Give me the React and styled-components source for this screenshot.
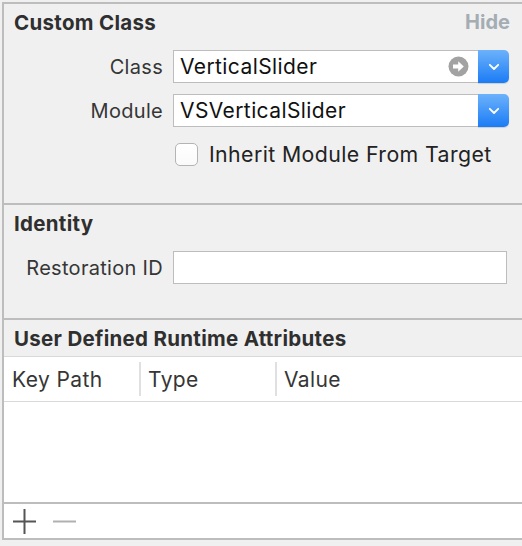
import React from "react";
import styled, { createGlobalStyle } from "styled-components";

const GlobalStyle = createGlobalStyle`
  html, body {
    margin: 0;
    padding: 0;
    background: #f0f0f0;
  }
  body {
    font-family: Inter, "Liberation Sans", sans-serif;
    -webkit-font-smoothing: antialiased;
  }
`;

const ArrowCircle = () => (
  <svg width="21" height="21" viewBox="0 0 21 21">
    <circle cx="10.5" cy="10.5" r="10" fill="#a2a2a2" />
    <path d="M5 8.6h5.2V5.2l5.6 5.3-5.6 5.3v-3.4H5z" fill="#fff" />
  </svg>
);

const Chevron = () => (
  <svg width="12" height="8" viewBox="0 0 12 8">
    <path d="M1.8 1.8l4.2 4.2 4.2-4.2" fill="none" stroke="#fff" strokeWidth="1.8" strokeLinecap="round" strokeLinejoin="round" />
  </svg>
);

const Plus = () => (
  <svg width="23" height="25" viewBox="0 0 23 25">
    <path d="M0 12.5h23M11.5 0v25" stroke="#555" strokeWidth="2" />
  </svg>
);

const Minus = () => (
  <svg width="23" height="25" viewBox="0 0 23 25">
    <path d="M0 12.5h23" stroke="#b0b0b0" strokeWidth="2" />
  </svg>
);

const App = () => {
  return (
    <>
      <GlobalStyle />
      <Page>
        <Panel>
          <Section $height={199}>
            <TitleRow>
              <Title>Custom Class</Title>
              <HideLink>Hide</HideLink>
            </TitleRow>
            <Form $top={16}>
              <Label>Class</Label>
              <Combo>
                <Field>
                  <FieldText>VerticalSlider</FieldText>
                  <ArrowCircle />
                </Field>
                <DropButton>
                  <Chevron />
                </DropButton>
              </Combo>
              <Label>Module</Label>
              <Combo>
                <Field>
                  <FieldText>VSVerticalSlider</FieldText>
                </Field>
                <DropButton>
                  <Chevron />
                </DropButton>
              </Combo>
              <span />
              <CheckRow>
                <Checkbox />
                <CheckLabel>Inherit Module From Target</CheckLabel>
              </CheckRow>
            </Form>
          </Section>

          <Section $height={113}>
            <TitleRow>
              <Title>Identity</Title>
            </TitleRow>
            <Form $top={16} $right={15}>
              <Label>Restoration ID</Label>
              <Field $plain />
            </Form>
          </Section>

          <AttrHeader>
            <Title>User Defined Runtime Attributes</Title>
          </AttrHeader>
          <Table>
            <HeaderRow>
              <HeaderCell $width={135}>Key Path</HeaderCell>
              <HeaderCell $width={136} $divider>Type</HeaderCell>
              <HeaderCell $divider>Value</HeaderCell>
            </HeaderRow>
            <TableBody />
            <Toolbar>
              <ToolButton><Plus /></ToolButton>
              <ToolButton><Minus /></ToolButton>
            </Toolbar>
          </Table>
        </Panel>
      </Page>
    </>
  );
};

const Page = styled.div`
  height: 546px;
  padding: 2px 0 0 2px;
  box-sizing: border-box;
  overflow: hidden;
`;

const Panel = styled.div`
  border-top: 2px solid #bdbdbd;
  border-left: 2px solid #bdbdbd;
  display: flex;
  flex-direction: column;
`;

const Section = styled.div`
  height: ${(p) => p.$height}px;
  border-bottom: 2px solid #bdbdbd;
  padding: 0 0 0 10px;
`;

const TitleRow = styled.div`
  display: flex;
  justify-content: space-between;
  align-items: center;
  height: 24px;
  margin-top: 6px;
  padding-right: 12px;
`;

const Title = styled.div`
  font-size: 20.5px;
  font-weight: 700;
  color: #2f2f2f;
  letter-spacing: 0.3px;
`;

const HideLink = styled.div`
  font-size: 20px;
  font-weight: 700;
  color: #a4acb4;
`;

const Form = styled.div`
  display: grid;
  grid-template-columns: 149px 1fr;
  column-gap: 10px;
  row-gap: 11px;
  align-items: center;
  margin-top: ${(p) => p.$top}px;
  padding-right: ${(p) => p.$right || 13}px;
`;

const Label = styled.div`
  font-size: 20px;
  color: #363636;
  text-align: right;
  letter-spacing: 0.3px;
`;

const Combo = styled.div`
  display: flex;
  height: 33px;
`;

const Field = styled.div`
  flex: 1;
  display: flex;
  align-items: center;
  justify-content: space-between;
  height: 33px;
  box-sizing: border-box;
  border: 1px solid #bdbdbd;
  border-right: ${(p) => (p.$plain ? "1px solid #bdbdbd" : "none")};
  background: #fff;
  padding: 0 9px 0 6px;
`;

const FieldText = styled.span`
  font-size: 21px;
  color: #111;
  letter-spacing: 0.4px;
`;

const DropButton = styled.div`
  width: 31px;
  height: 33px;
  display: flex;
  align-items: center;
  justify-content: center;
  border-radius: 0 5px 5px 0;
  background: linear-gradient(#6cb2fb, #1b7cf5);
  box-shadow: 0 1px 1px rgba(0, 0, 0, 0.15);
`;

const CheckRow = styled.div`
  display: flex;
  align-items: center;
  gap: 11px;
  padding-left: 2px;
  margin-top: 3px;
`;

const Checkbox = styled.div`
  width: 23px;
  height: 23px;
  box-sizing: border-box;
  border: 1px solid #b4b4b4;
  border-radius: 5px;
  background: linear-gradient(#fff, #fafafa);
`;

const CheckLabel = styled.span`
  font-size: 21.3px;
  color: #222;
  letter-spacing: 0.4px;
`;

const AttrHeader = styled.div`
  height: 36px;
  padding-left: 10px;
  display: flex;
  align-items: center;
`;

const Table = styled.div`
  background: #fff;
  border-top: 1px solid #d9d9d9;
`;

const HeaderRow = styled.div`
  display: flex;
  align-items: center;
  height: 44px;
  border-bottom: 1px solid #d9d9d9;
`;

const HeaderCell = styled.div`
  ${(p) => (p.$width ? `width: ${p.$width}px;` : "flex: 1;")}
  box-sizing: border-box;
  height: 34px;
  display: flex;
  align-items: center;
  padding-left: ${(p) => (p.$divider ? 7 : 8)}px;
  border-left: ${(p) => (p.$divider ? "2px solid #e0e0e0" : "none")};
  font-size: 21px;
  color: #363636;
  letter-spacing: 0.4px;
`;

const TableBody = styled.div`
  height: 100px;
  border-bottom: 2px solid #bdbdbd;
`;

const Toolbar = styled.div`
  height: 34px;
  display: flex;
  align-items: center;
  gap: 17px;
  padding-left: 9px;
  border-bottom: 2px solid #bdbdbd;
`;

const ToolButton = styled.div`
  display: flex;
  align-items: center;
`;

export default App;
